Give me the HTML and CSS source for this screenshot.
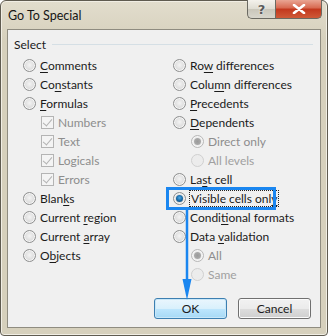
FILE: index.html
```html
<!DOCTYPE html>
<html>
<head>
    <title>Go To Special</title>
    <link rel="stylesheet" href="styles.css">
</head>
<body>
    <div class="window">
        <div class="titlebar">
            <span class="title">Go To Special</span>
            <div class="caption-buttons">
                <div class="cap-btn help">?</div>
                <div class="cap-btn close">
                    <svg width="14" height="10" viewBox="0 0 14 10">
                        <path d="M2 1 L12 9 M12 1 L2 9" stroke="#fff" stroke-width="2.6" stroke-linecap="round"/>
                    </svg>
                </div>
            </div>
        </div>

        <div class="client">
            <div class="group-title"><span>Select</span></div>

            <div class="options">
                <div class="col">
                    <div class="row"><span class="radio"></span><span><u>C</u>omments</span></div>
                    <div class="row"><span class="radio"></span><span>Co<u>n</u>stants</span></div>
                    <div class="row"><span class="radio"></span><span><u>F</u>ormulas</span></div>
                    <div class="row sub disabled"><span class="check"></span><span>Numbers</span></div>
                    <div class="row sub disabled"><span class="check"></span><span>Text</span></div>
                    <div class="row sub disabled"><span class="check"></span><span>Logicals</span></div>
                    <div class="row sub disabled"><span class="check"></span><span>Errors</span></div>
                    <div class="row"><span class="radio"></span><span>Blan<u>k</u>s</span></div>
                    <div class="row"><span class="radio"></span><span>Current <u>r</u>egion</span></div>
                    <div class="row"><span class="radio"></span><span>Current <u>a</u>rray</span></div>
                    <div class="row"><span class="radio"></span><span>O<u>b</u>jects</span></div>
                </div>
                <div class="col">
                    <div class="row"><span class="radio"></span><span>Ro<u>w</u> differences</span></div>
                    <div class="row"><span class="radio"></span><span>Colu<u>m</u>n differences</span></div>
                    <div class="row"><span class="radio"></span><span><u>P</u>recedents</span></div>
                    <div class="row"><span class="radio"></span><span><u>D</u>ependents</span></div>
                    <div class="row sub disabled"><span class="radio on"></span><span>Direct only</span></div>
                    <div class="row sub disabled faint"><span class="radio"></span><span>All levels</span></div>
                    <div class="row"><span class="radio"></span><span>La<u>s</u>t cell</span></div>
                    <div class="row selected">
                        <span class="radio on"></span><span class="focus">Visible cells onl<u>y</u></span>
                        <span class="highlight"></span>
                    </div>
                    <div class="row"><span class="radio"></span><span>Condi<u>t</u>ional formats</span></div>
                    <div class="row"><span class="radio"></span><span>Data <u>v</u>alidation</span></div>
                    <div class="row sub disabled"><span class="radio on"></span><span>All</span></div>
                    <div class="row sub disabled faint"><span class="radio"></span><span>Same</span></div>
                </div>
            </div>

            <div class="buttons">
                <button class="btn default">OK</button>
                <button class="btn">Cancel</button>
            </div>

            <svg class="arrow" width="14" height="92" viewBox="0 0 14 92">
                <line x1="7" y1="0" x2="7" y2="76" stroke="#1a86f0" stroke-width="2.5"/>
                <path d="M2.5 70 L7 91 L11.5 70 Z" fill="#1a86f0"/>
            </svg>
        </div>
    </div>
</body>
</html>
```

FILE: styles.css
```css
* {
    margin: 0;
    padding: 0;
    box-sizing: border-box;
}

body {
    width: 328px;
    height: 336px;
    background: #ffffff;
    font-family: Lato, "Open Sans", sans-serif;
    font-size: 12px;
    color: #1b1b1b;
}

.window {
    width: 328px;
    height: 336px;
    background: linear-gradient(#e2ddcd, #d6d0bc 40px, #d6d0bc);
    border: 1px solid #5f5b50;
    border-radius: 6px 6px 4px 4px;
    padding: 0 6px 7px 6px;
    display: flex;
    flex-direction: column;
    box-shadow: inset 0 0 0 1px #f1eee4;
}

.titlebar {
    height: 28px;
    display: flex;
    justify-content: space-between;
    align-items: flex-start;
}

.title {
    margin-top: 7px;
    margin-left: 1px;
    font-size: 12.5px;
    color: #151515;
}

.caption-buttons {
    display: flex;
    margin-top: -1px;
    margin-right: -1px;
}

.cap-btn {
    height: 19px;
    border: 1px solid #6b6a62;
    border-top: none;
    display: flex;
    align-items: center;
    justify-content: center;
}

.help {
    width: 28px;
    border-right: none;
    border-radius: 0 0 0 5px;
    background: linear-gradient(#f4f2ec, #dedcd2 50%, #c9c6ba 51%, #d8d6cc);
    color: #5a5a5a;
    font-family: "DejaVu Sans", sans-serif;
    font-weight: bold;
    font-size: 13px;
    text-shadow: 0 0 2px #fff;
}

.close {
    width: 47px;
    border-radius: 0 0 5px 0;
    background: linear-gradient(#e9a593, #d7684f 45%, #c2371d 50%, #cf5a38);
}

.client {
    flex: 1;
    position: relative;
    background: #f0f0f0;
    border: 1px solid #8f8c80;
    padding: 6px 7px 8px 6px;
    display: flex;
    flex-direction: column;
}

.group-title {
    display: flex;
    align-items: center;
    gap: 6px;
    height: 16px;
}

.group-title::after {
    content: "";
    flex: 1;
    height: 1px;
    background: #d5dfe5;
}

.options {
    display: grid;
    grid-template-columns: 150px 1fr;
    margin-top: 4px;
    padding-left: 9px;
}

.row {
    position: relative;
    height: 19px;
    display: flex;
    align-items: center;
    white-space: nowrap;
}

.row u {
    text-decoration-thickness: 1px;
    text-underline-offset: 2px;
}

.row.sub {
    padding-left: 18px;
}

.disabled {
    color: #8d8d8d;
}

.radio {
    width: 13px;
    height: 13px;
    border-radius: 50%;
    margin-right: 4px;
    border: 1px solid #8e8f8f;
    background: radial-gradient(circle at 50% 45%, #f4f4f4 0, #e2e2e2 45%, #cfcfcf 100%);
    box-shadow: inset 0 0 0 1px #f6f6f6;
    position: relative;
    flex-shrink: 0;
}

.radio.on::after {
    content: "";
    position: absolute;
    left: 2px;
    top: 2px;
    width: 7px;
    height: 7px;
    border-radius: 50%;
    background: radial-gradient(circle at 50% 40%, #4fa9e8 0, #1b6ca8 50%, #0d3d66 100%);
}

.disabled .radio {
    border-color: #b8b8b8;
    background: #ececec;
}

.disabled .radio.on::after {
    background: radial-gradient(circle, #9a9a9a 0, #a8a8a8 60%, #c4c4c4 100%);
}

.faint .radio {
    border-color: #d0d0d0;
    box-shadow: none;
}

.faint {
    color: #a0a0a0;
}

.check {
    width: 13px;
    height: 13px;
    margin-right: 4px;
    border: 1px solid #b4b4b4;
    background: #f4f4f4;
    position: relative;
    flex-shrink: 0;
}

.check::after {
    content: "";
    position: absolute;
    left: 3px;
    top: 0px;
    width: 4px;
    height: 8px;
    border: solid #b2b2b2;
    border-width: 0 1.5px 1.5px 0;
    transform: rotate(40deg);
}

.focus {
    outline: 1px dotted #222;
    outline-offset: 0;
    padding: 0 1px;
}

.highlight {
    position: absolute;
    left: -7px;
    top: -2px;
    width: 110px;
    height: 23px;
    border: 3px solid #1a86f0;
}

.buttons {
    margin-top: auto;
    display: flex;
    justify-content: flex-end;
    gap: 11px;
    padding-right: 2px;
}

.btn {
    width: 73px;
    height: 21px;
    font-family: inherit;
    font-size: 12px;
    color: #1b1b1b;
    border: 1px solid #707070;
    border-radius: 3px;
    background: linear-gradient(#f2f2f2, #ebebeb 50%, #dddddd 51%, #cfcfcf);
    box-shadow: inset 0 0 0 1px #fbfbfb;
}

.btn.default {
    border-color: #3c7fb1;
    background: linear-gradient(#eaf6fd, #d9f0fc 50%, #bee6fd 51%, #a7d9f5);
    box-shadow: inset 0 0 0 1px #c9e7f8;
}

.arrow {
    position: absolute;
    left: 172px;
    top: 179px;
}
```
